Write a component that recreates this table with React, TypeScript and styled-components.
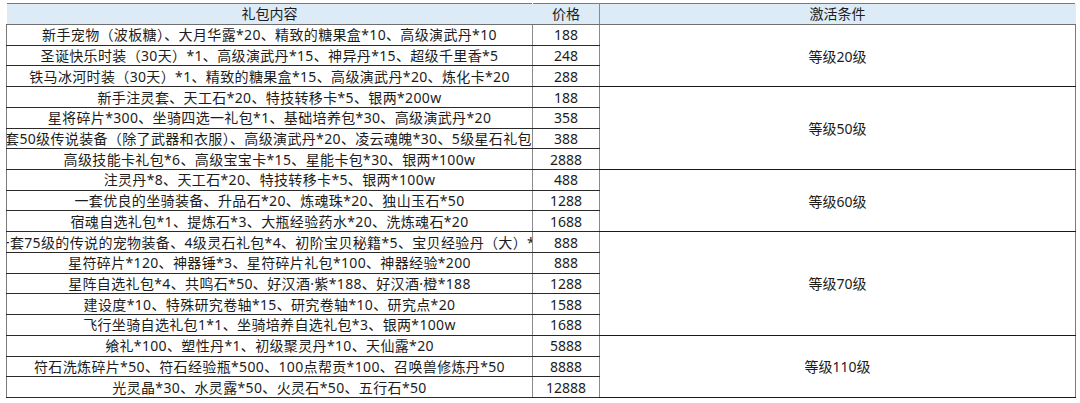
import React from "react";
import styled, { createGlobalStyle } from "styled-components";

const Global = createGlobalStyle`
  html, body { margin: 0; padding: 0; background: #ffffff; }
  body { font-family: "Noto Sans", "Noto Sans CJK SC", sans-serif; }
`;

const Page = styled.div`
  padding: 3px 0 0 6px;
  width: 1080px;
  box-sizing: border-box;
`;

const Table = styled.table`
  border-collapse: collapse;
  table-layout: fixed;
  width: 1069px;
  border: 1px solid #7a7a7a;
  color: #1c1c1c;
  font-size: 14px;
  font-family: "Noto Sans", "Noto Sans CJK SC", sans-serif;
`;

const HeadRow = styled.tr`
  height: 21px;
  background: #ddebf7;
`;

const Th = styled.th<{ $edge?: boolean }>`
  font-weight: normal;
  padding: 0;
  text-align: center;
  line-height: 20px;
  border-bottom: 1px solid #6f6f6f;
  border-left: 1px solid ${(p) => (p.$edge ? "#8a8a8a" : "transparent")};
  border-right: 1px solid ${(p) => (p.$edge ? "#8a8a8a" : "transparent")};
`;

const BodyRow = styled.tr`
  height: 20.72px;
`;

const ContentCell = styled.td`
  padding: 0;
  border-bottom: 1px solid #2a2a2a;
  overflow: hidden;
`;

const Clip = styled.div`
  display: flex;
  justify-content: center;
  white-space: nowrap;
  overflow: hidden;
  line-height: 19px;
  letter-spacing: 0.35px;
`;

const PriceCell = styled.td`
  padding: 0;
  text-align: center;
  line-height: 19px;
  border-bottom: 1px solid #2a2a2a;
  border-left: 1px solid #8a8a8a;
  border-right: 1px solid #8a8a8a;
`;

const LevelCell = styled.td`
  padding: 0;
  text-align: center;
  vertical-align: middle;
  border-bottom: 1px solid #1a1a1a;
`;

type Group = { level: string; rows: [string, string][] };

const groups: Group[] = [
  {
    level: "等级20级",
    rows: [
      ["新手宠物（波板糖）、大月华露*20、精致的糖果盒*10、高级演武丹*10", "188"],
      ["圣诞快乐时装（30天）*1、高级演武丹*15、神异丹*15、超级千里香*5", "248"],
      ["铁马冰河时装（30天）*1、精致的糖果盒*15、高级演武丹*20、炼化卡*20", "288"],
    ],
  },
  {
    level: "等级50级",
    rows: [
      ["新手注灵套、天工石*20、特技转移卡*5、银两*200w", "188"],
      ["星将碎片*300、坐骑四选一礼包*1、基础培养包*30、高级演武丹*20", "358"],
      ["一套50级传说装备（除了武器和衣服）、高级演武丹*20、凌云魂魄*30、5级星石礼包*1", "388"],
      ["高级技能卡礼包*6、高级宝宝卡*15、星能卡包*30、银两*100w", "2888"],
    ],
  },
  {
    level: "等级60级",
    rows: [
      ["注灵丹*8、天工石*20、特技转移卡*5、银两*100w", "488"],
      ["一套优良的坐骑装备、升品石*20、炼魂珠*20、独山玉石*50", "1288"],
      ["宿魂自选礼包*1、提炼石*3、大瓶经验药水*20、洗炼魂石*20", "1688"],
    ],
  },
  {
    level: "等级70级",
    rows: [
      ["一套75级的传说的宠物装备、4级灵石礼包*4、初阶宝贝秘籍*5、宝贝经验丹（大）*1", "888"],
      ["星符碎片*120、神器锤*3、星符碎片礼包*100、神器经验*200", "888"],
      ["星阵自选礼包*4、共鸣石*50、好汉酒·紫*188、好汉酒·橙*188", "1288"],
      ["建设度*10、特殊研究卷轴*15、研究卷轴*10、研究点*20", "1588"],
      ["飞行坐骑自选礼包1*1、坐骑培养自选礼包*3、银两*100w", "1688"],
    ],
  },
  {
    level: "等级110级",
    rows: [
      ["飨礼*100、塑性丹*1、初级聚灵丹*10、天仙露*20", "5888"],
      ["符石洗炼碎片*50、符石经验瓶*500、100点帮贡*100、召唤兽修炼丹*50", "8888"],
      ["光灵晶*30、水灵露*50、火灵石*50、五行石*50", "12888"],
    ],
  },
];

export default function App() {
  return (
    <>
      <Global />
      <Page>
        <Table>
          <colgroup>
            <col style={{ width: 526 }} />
            <col style={{ width: 67 }} />
            <col style={{ width: 476 }} />
          </colgroup>
          <thead>
            <HeadRow>
              <Th>礼包内容</Th>
              <Th $edge>价格</Th>
              <Th>激活条件</Th>
            </HeadRow>
          </thead>
          <tbody>
            {groups.map((g) =>
              g.rows.map(([content, price], i) => (
                <BodyRow key={g.level + i}>
                  <ContentCell>
                    <Clip>{content}</Clip>
                  </ContentCell>
                  <PriceCell>{price}</PriceCell>
                  {i === 0 && <LevelCell rowSpan={g.rows.length}>{g.level}</LevelCell>}
                </BodyRow>
              ))
            )}
          </tbody>
        </Table>
      </Page>
    </>
  );
}
